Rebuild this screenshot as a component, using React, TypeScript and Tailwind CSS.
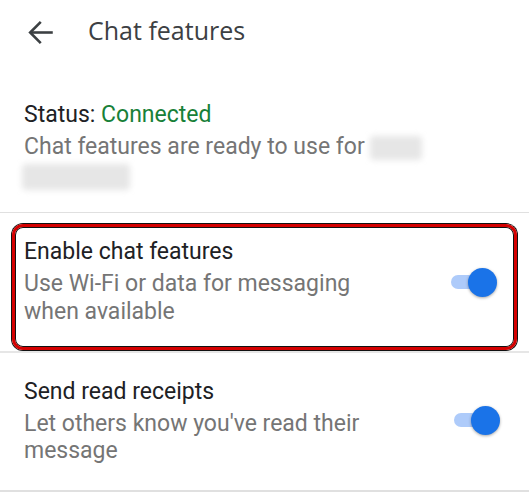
import React from "react";

function Toggle() {
  return (
    <div className="relative w-[48px] h-[29px] shrink-0">
      <div className="absolute left-[2px] top-[7px] w-[42px] h-[14px] rounded-full bg-[#aecbfa]" />
      <div className="absolute right-0 top-0 w-[29px] h-[29px] rounded-full bg-[#1a73e8] shadow-[0_1px_3px_rgba(0,0,0,0.35)]" />
    </div>
  );
}

export default function App() {
  return (
    <div className="w-[529px] h-[500px] bg-white overflow-hidden" style={{ fontFamily: "Roboto, 'Noto Sans', sans-serif" }}>
      {/* Header */}
      <div className="flex items-center h-[64px]">
        <div className="w-[88px] flex pl-[25px]">
          <svg width="31" height="31" viewBox="0 0 24 24" fill="none" stroke="#3c4043" strokeWidth="2" strokeLinecap="square">
            <path d="M20.5 12H5" />
            <path d="M11.5 4.5L4 12l7.5 7.5" />
          </svg>
        </div>
        <div className="text-[25px] text-[#3c4043] pb-[2px]" style={{ fontFamily: "'Open Sans', sans-serif" }}>Chat features</div>
      </div>

      {/* Status */}
      <div className="px-[24px] pt-[36px] pb-[22px] text-[23px]">
        <div className="text-[#202124] leading-[30px]">
          Status: <span className="text-[#188038]">Connected</span>
        </div>
        <div className="text-[#757575] mt-[2px] leading-[29px]">
          Chat features are ready to use for{" "}
          <span className="inline-block align-middle w-[52px] h-[24px] bg-[#e6e6e6] blur-[3px] rounded" />
          <br />
          <span className="inline-block align-middle -ml-[2px] w-[108px] h-[26px] bg-[#e6e6e6] blur-[3px] rounded" />
        </div>
      </div>
      <div className="h-px bg-[#e0e0e0]" />

      {/* Enable chat features (highlighted) */}
      <div className="px-[12px] pt-[11px] pb-[1px]">
        <div className="h-[126px] rounded-[11px] border-[3px] border-[#d40000] shadow-[0_0_0_1px_#111,inset_0_0_0_1px_#111] flex items-start pl-[9px] pr-[17px] pt-[10px]">
          <div className="flex-1">
            <div className="text-[23px] leading-[30px] text-[#202124]">Enable chat features</div>
            <div className="text-[23px] leading-[28px] mt-[3px] text-[#757575]">
              Use Wi-Fi or data for messaging
              <br />
              when available
            </div>
          </div>
          <div className="mt-[31px]">
            <Toggle />
          </div>
        </div>
      </div>
      <div className="h-[2px] bg-[#e6e6e6]" />

      {/* Send read receipts */}
      <div className="flex items-start pl-[24px] pr-[29px] pt-[24px] h-[137px]">
        <div className="flex-1">
          <div className="text-[23px] leading-[30px] text-[#202124]">Send read receipts</div>
          <div className="text-[23px] leading-[27px] mt-[3px] text-[#757575]">
            Let others know you've read their
            <br />
            message
          </div>
        </div>
        <div className="mt-[29px]">
          <Toggle />
        </div>
      </div>
      <div className="h-[2px] bg-[#e0e0e0]" />
    </div>
  );
}
